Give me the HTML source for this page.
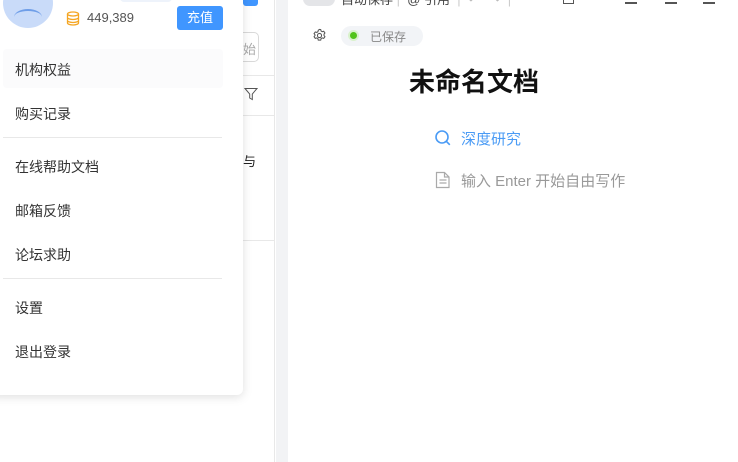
<!DOCTYPE html>
<html><head><meta charset="utf-8"><style>
*{margin:0;padding:0;box-sizing:border-box}
body{width:738px;height:462px;overflow:hidden;background:#fff;position:relative;font-family:"Liberation Sans","Noto Sans CJK SC",sans-serif}
.abs{position:absolute}
.item{position:absolute;left:15px;font-size:14px;color:#333}
</style></head><body>
<div class="abs" style="left:0;top:0;width:275px;height:462px;background:#fff;border-right:1px solid #e8e8e8"></div>
<div class="abs" style="left:243px;top:0;width:15px;height:6px;background:#4096ff;border-radius:0 0 3px 3px"></div>
<div class="abs" style="left:230px;top:32px;width:29px;height:30px;border:1px solid #d9d9d9;border-radius:5px;font-size:13px;color:#aaa;padding:6px 0 0 12px">始</div>
<div class="abs" style="left:0;top:75px;width:275px;height:1px;background:#e8e8e8"></div>
<svg class="abs" style="left:244px;top:87px" width="14" height="14" viewBox="0 0 14 14"><path d="M1 1.5h12L8.3 7v5.5L5.7 11V7z" fill="none" stroke="#555" stroke-width="1"/></svg>
<div class="abs" style="left:0;top:115px;width:275px;height:1px;background:#e8e8e8"></div>
<div class="abs" style="left:243px;top:151px;font-size:13px;color:#222">与</div>
<div class="abs" style="left:0;top:240px;width:275px;height:1px;background:#e8e8e8"></div>
<div class="abs" style="left:276px;top:0;width:12px;height:462px;background:#f2f3f5"></div>
<div class="abs" style="left:303px;top:-8px;width:32px;height:14px;border-radius:7px;background:#e4e5e8"></div>
<div class="abs" style="left:341px;top:-11px;font-size:13px;color:#444;white-space:nowrap">自动保存 <span style="color:#ccc">|</span> &nbsp;@ 引用 &nbsp;<span style="color:#ccc">|</span> &nbsp;<span style="color:#bbb">↶ &nbsp; ↷</span> &nbsp;<span style="color:#ccc">|</span></div>
<div class="abs" style="left:563px;top:-4px;width:11px;height:8px;border:1.5px solid #555;border-top:none"></div>
<div class="abs" style="left:625px;top:2px;width:12px;height:1.5px;background:#555"></div>
<div class="abs" style="left:665px;top:2px;width:12px;height:1.5px;background:#555"></div>
<div class="abs" style="left:703px;top:2px;width:12px;height:1.5px;background:#555"></div>
<svg class="abs" style="left:312px;top:28px" width="15" height="15" viewBox="0 0 16 16"><path d="M8 1.5l1.3.2.4 1.6 1.2.7 1.6-.5 1.3 1.8-1 1.3v1.4l1 1.3-1.3 1.8-1.6-.5-1.2.7-.4 1.6H6.7l-.4-1.6-1.2-.7-1.6.5-1.3-1.8 1-1.3V7.3l-1-1.3L3.5 4.2l1.6.5 1.2-.7.4-1.6z" fill="none" stroke="#555" stroke-width="1.1"/><circle cx="8" cy="8" r="2.2" fill="none" stroke="#555" stroke-width="1.1"/></svg>
<div class="abs" style="left:341px;top:26px;width:82px;height:20px;border-radius:10px;background:#f2f4f7"></div>
<div class="abs" style="left:350px;top:32px;width:7px;height:7px;border-radius:50%;background:#52c41a;box-shadow:0 0 0 2px #d9f2cc"></div>
<div class="abs" style="left:370px;top:28px;font-size:12px;color:#888">已保存</div>
<div class="abs" style="left:409px;top:62px;font-size:26px;font-weight:bold;color:#111">未命名文档</div>
<svg class="abs" style="left:434px;top:129px" width="18" height="18" viewBox="0 0 18 18"><circle cx="8" cy="8" r="6" fill="none" stroke="#4a9bf5" stroke-width="1.6"/><path d="M12.3 12.3l3.5 3.5" stroke="#4a9bf5" stroke-width="1.6"/></svg>
<div class="abs" style="left:461px;top:128px;font-size:15px;color:#4a9bf5">深度研究</div>
<svg class="abs" style="left:435px;top:171px" width="16" height="18" viewBox="0 0 16 18"><path d="M1.5 1.5h8l4.5 4.5v10.5h-12.5z M9.5 1.5v4.5h4.5 M4.5 9h7 M4.5 12h7" fill="none" stroke="#aaa" stroke-width="1.2"/></svg>
<div class="abs" style="left:461px;top:170px;font-size:15px;color:#999">输入 Enter 开始自由写作</div>
<div class="abs" style="left:-10px;top:-10px;width:253px;height:405px;background:#fff;border-radius:6px;box-shadow:0 2px 10px rgba(0,0,0,.13)"></div>
<div class="abs" style="left:3px;top:-22px;width:50px;height:50px;border-radius:50%;background:#c9dbf9"></div>
<div class="abs" style="left:14px;top:9px;width:28px;height:16px;border-radius:50%;border-top:2px solid #6f9ee8"></div>
<div class="abs" style="left:120px;top:-6px;width:52px;height:8px;border-radius:4px;background:#eef3fb"></div>
<svg class="abs" style="left:66px;top:11px" width="14" height="15" viewBox="0 0 14 15"><g fill="none" stroke="#f5a623" stroke-width="1.3"><ellipse cx="7" cy="3" rx="5.5" ry="2"/><path d="M1.5 3v9c0 1.1 2.5 2 5.5 2s5.5-.9 5.5-2V3M1.5 6.5c0 1.1 2.5 2 5.5 2s5.5-.9 5.5-2M1.5 9.5c0 1.1 2.5 2 5.5 2s5.5-.9 5.5-2"/></g></svg>
<div class="abs" style="left:87px;top:10px;font-size:13px;color:#555">449,389</div>
<div class="abs" style="left:177px;top:6px;width:46px;height:24px;border-radius:3px;background:#4096ff;color:#fff;font-size:13px;text-align:center;line-height:24px">充值</div>
<div class="abs" style="left:3px;top:49px;width:220px;height:39px;background:#fbfbfc;border-radius:4px"></div>
<div class="item" style="top:60px">机构权益</div>
<div class="item" style="top:104px">购买记录</div>
<div class="abs" style="left:3px;top:137px;width:219px;height:1px;background:#e8e8e8"></div>
<div class="item" style="top:157px">在线帮助文档</div>
<div class="item" style="top:201px">邮箱反馈</div>
<div class="item" style="top:245px">论坛求助</div>
<div class="abs" style="left:3px;top:278px;width:219px;height:1px;background:#e8e8e8"></div>
<div class="item" style="top:298px">设置</div>
<div class="item" style="top:342px">退出登录</div>
</body></html>
